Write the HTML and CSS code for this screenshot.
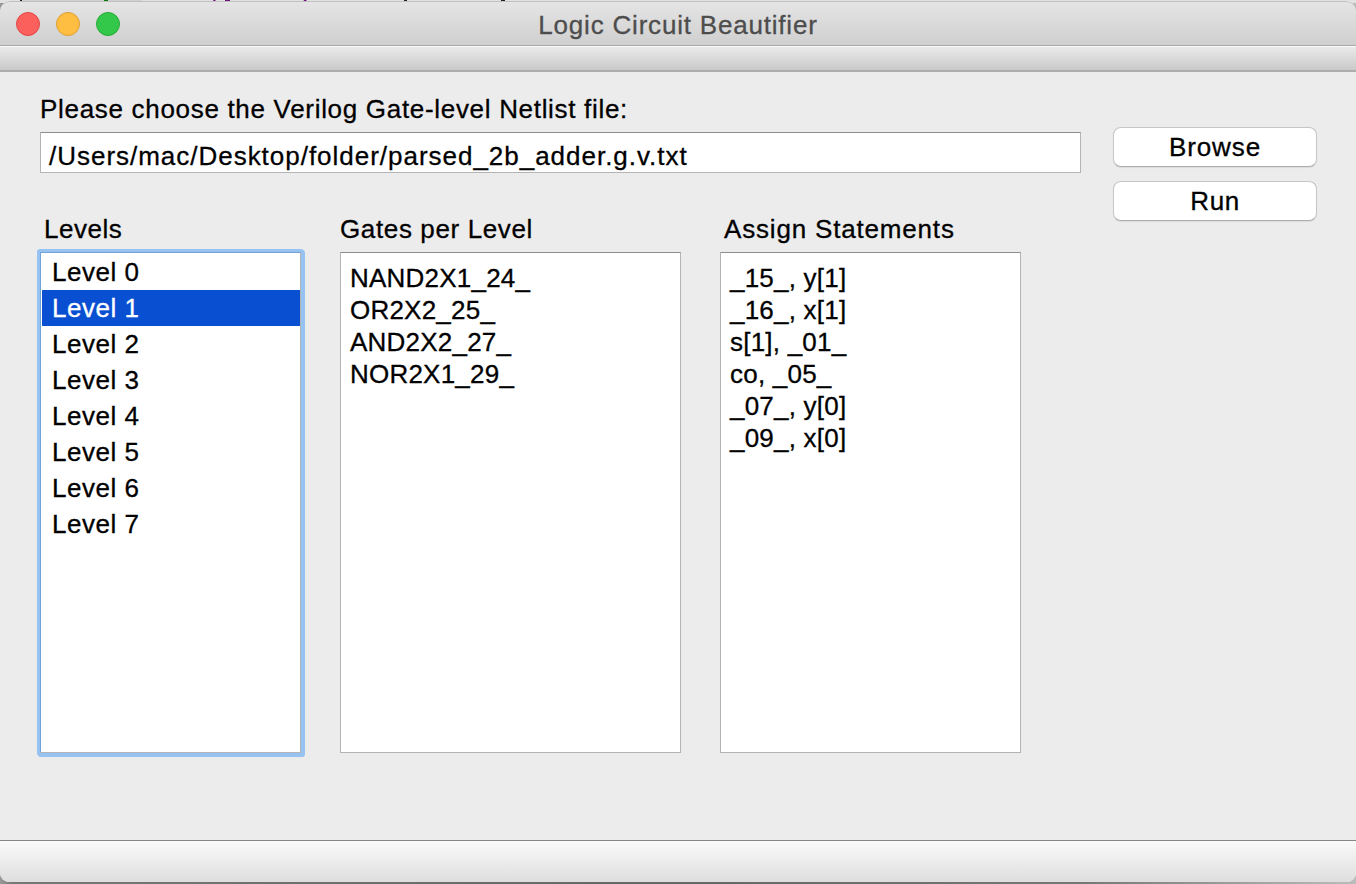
FILE: index.html
```html
<!DOCTYPE html>
<html lang="en">
<head>
<meta charset="utf-8">
<title>Logic Circuit Beautifier</title>
<link rel="stylesheet" href="styles.css">
</head>
<body>
<div class="desktop">
  <svg class="backdrop-top" width="1356" height="3" viewBox="0 0 1356 3" aria-hidden="true">
    <path fill="#e2e2e2" d="M0 0h1356v3H0z"/>
    <path fill="#d0d0d0" d="M22 0h120v3H22z"/>
    <path fill="#222" d="M20 0h2v2h-2zM404 0h3v2h-3zM501 0h4v1h-4z"/>
    <path fill="#087a08" d="M104 0h4v2h-4z"/>
    <path fill="#70107c" d="M213 0h2l2 2h-3zM304 0h3l-2 2h-2zM225 0h5v1h-5z"/>
  </svg>
  <div class="window">
    <header class="titlebar">
      <div class="lights">
        <span class="light light-close"></span>
        <span class="light light-minimize"></span>
        <span class="light light-zoom"></span>
      </div>
      <h1 class="title">Logic Circuit Beautifier</h1>
    </header>
    <div class="toolbar"></div>
    <main class="content">
      <div class="main-column">
        <label class="file-label" for="netlist">Please choose the Verilog Gate-level Netlist file:</label>
        <div class="file-field" id="netlist"><span class="path">/Users/mac/Desktop/folder/parsed_2b_adder.g.v.txt</span></div>
        <div class="panels">
          <section class="panel panel-levels">
            <h2 class="panel-title title-levels"><span>Levels</span></h2>
            <ul class="box box-focused levels">
              <li class="level">Level 0</li>
              <li class="level level-selected">Level 1</li>
              <li class="level">Level 2</li>
              <li class="level">Level 3</li>
              <li class="level">Level 4</li>
              <li class="level">Level 5</li>
              <li class="level">Level 6</li>
              <li class="level">Level 7</li>
            </ul>
          </section>
          <section class="panel panel-gates">
            <h2 class="panel-title title-gates"><span>Gates per Level</span></h2>
            <div class="box lines gates">
              <div>NAND2X1_24_</div>
              <div>OR2X2_25_</div>
              <div>AND2X2_27_</div>
              <div>NOR2X1_29_</div>
            </div>
          </section>
          <section class="panel panel-assigns">
            <h2 class="panel-title title-assigns"><span>Assign Statements</span></h2>
            <div class="box lines assigns">
              <div>_15_, y[1]</div>
              <div>_16_, x[1]</div>
              <div>s[1], _01_</div>
              <div>co, _05_</div>
              <div>_07_, y[0]</div>
              <div>_09_, x[0]</div>
            </div>
          </section>
        </div>
      </div>
      <div class="actions">
        <button class="button button-browse" type="button">Browse</button>
        <button class="button button-run" type="button">Run</button>
      </div>
    </main>
    <footer class="statusbar"></footer>
  </div>
</div>
</body>
</html>
```
FILE: styles.css
```css
* { box-sizing: border-box; }

body {
  margin: 0;
  overflow: hidden;
  font: 26px/30px "Liberation Sans", Arial, sans-serif;
  color: #000;
  -webkit-text-stroke: 0.3px;
}

.desktop {
  position: relative;
  width: 1356px;
  height: 884px;
  padding-top: 1px;
  background: linear-gradient(90deg, #999, #777 12px, #666 50%, #777 80%, #bbb);
}

.backdrop-top {
  position: absolute;
  top: 0;
  left: 0;
}

.window {
  position: relative;
  display: flex;
  flex-direction: column;
  height: 881px;
  border-radius: 10px 10px 9px 9px;
  background: #ececec;
  overflow: hidden;
}

.titlebar {
  display: grid;
  grid-template-columns: 1fr auto 1fr;
  align-items: center;
  height: 45px;
  padding: 1px 16px 0;
  border-top: 1px solid #c0c0c0;
  border-bottom: 1px solid #aaa;
  border-radius: 10px 10px 0 0;
  background: linear-gradient(#e5e5e5, #cfcfcf);
}

.lights { display: flex; gap: 16px; }

.light {
  width: 24px;
  height: 24px;
  border: 1px solid;
  border-radius: 50%;
}

.light-close { background: #fc605c; border-color: #df4744; }
.light-minimize { background: #fdbe41; border-color: #de9f34; }
.light-zoom { background: #34c84a; border-color: #27aa35; }

.title {
  margin: 0;
  padding-top: 2px;
  font-size: 26px;
  font-weight: 400;
  color: #4d4d4d;
  white-space: nowrap;
  letter-spacing: 0.8px;
}

.toolbar {
  height: 26px;
  border-top: 1px solid #fafafa;
  border-bottom: 2px solid #adadad;
  background: linear-gradient(#eaeaea, #c9c9c9);
}

.content {
  flex: 1;
  display: flex;
  gap: 32px;
  padding: 22px 39px 0 40px;
}

.main-column { width: 1041px; }

.file-label, .path { display: block; white-space: nowrap; }
.file-label { letter-spacing: 0.69px; }
.path { letter-spacing: 0.98px; }

.file-field {
  height: 41px;
  margin-top: 8px;
  padding: 8px 8px 0;
  border: 1px solid #b4b4b4;
  border-top-color: #8e8e8e;
  background: #fff;
}

.panels { display: flex; gap: 39px; margin-top: 41px; }
.panel-levels { width: 261px; }
.panel-gates { width: 341px; }
.panel-assigns { width: 301px; }

.panel-title {
  margin: 0 0 8px;
  font-size: 26px;
  font-weight: 400;
  white-space: nowrap;
}

.title-levels { padding-left: 4px; letter-spacing: 0.5px; }
.title-gates { letter-spacing: 0.63px; }
.title-assigns { padding-left: 4px; letter-spacing: 0.82px; }

.box {
  height: 501px;
  margin: 0;
  border: 1px solid #b4b4b4;
  border-top-color: #8e8e8e;
  background: #fff;
}

.box-focused {
  border-color: #72a2d5 #b4b4b4 #b4b4b4 #72a2d5;
  border-radius: 1px;
  box-shadow: 0 0 0 3px #97c3f3, 1px 1px 0 3px #97c3f3;
}

.levels { padding: 1px 0 0 1px; list-style: none; }

.level {
  height: 36px;
  padding-left: 10px;
  line-height: 36px;
  letter-spacing: 0.5px;
}

.level-selected { background: #084fd1; color: #fff; }

.lines { padding: 9px 9px 0; line-height: 32px; letter-spacing: 0.22px; }

.actions {
  display: flex;
  flex-direction: column;
  gap: 14px;
  width: 204px;
  padding-top: 33px;
}

.button {
  height: 40px;
  padding: 0;
  border: 1px solid #c6c6c6;
  border-bottom-color: #adadad;
  border-radius: 8px;
  background: #fff;
  box-shadow: 0 1px 1px #dcdcdc;
  font: inherit;
  color: #000;
}

.button-browse { letter-spacing: 0.9px; }
.button-run { letter-spacing: 0.6px; }

.statusbar {
  height: 42px;
  border-top: 1px solid #858585;
  background: linear-gradient(#fafafa, #dedede);
}
```
